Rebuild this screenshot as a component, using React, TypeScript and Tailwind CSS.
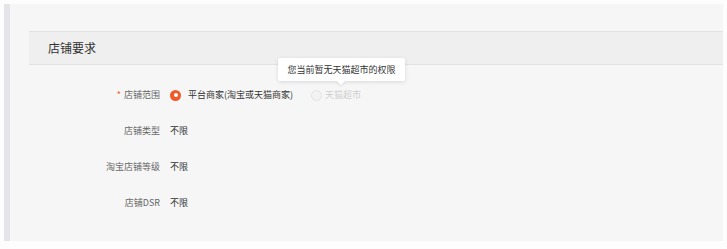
import React from "react";

const font = { fontFamily: '"Noto Sans CJK SC", "Noto Sans", sans-serif' };

function Row({ label, children, required }: { label: string; children: React.ReactNode; required?: boolean }) {
  return (
    <div className="flex h-[36px] items-center">
      <div className="flex w-[131px] shrink-0 items-center justify-end text-[9px] text-[#666]">
        {required && <span className="mr-[3px] text-[9px] text-[#f05a28]">*</span>}
        <span>{label}</span>
      </div>
      <div className="ml-[10px] flex items-center text-[9px] text-[#333]">{children}</div>
    </div>
  );
}

export default function App() {
  return (
    <div className="h-[249px] w-[727px] bg-[#fdfdfd] pl-[4px] pt-[4px]" style={font}>
      <div className="flex h-[237px] w-[719px]">
        <div className="w-[6px] shrink-0 bg-[#e4e4e9]" />
        <div className="flex-1 bg-[#f6f6f6] pl-[19px] pt-[27px]">
          <div className="flex h-[34px] items-center border-y border-[#e2e2e2] bg-[#efefef] pl-[19px] text-[12px] text-[#333]">
            店铺要求
          </div>
          <div className="mt-[12px]">
            <Row label="店铺范围" required>
              <div className="flex h-[12px] items-center">
                <span className="flex h-[11px] w-[11px] items-center justify-center rounded-full bg-[#f05a28]">
                  <span className="h-[4px] w-[4px] rounded-full bg-white" />
                </span>
                <span className="ml-[7px] text-[#333]">平台商家(淘宝或天猫商家)</span>
              </div>
              <div className="relative ml-[18px] flex h-[12px] items-center">
                <span className="h-[11px] w-[11px] rounded-full border border-[#e3e3e3] bg-[#f3f3f3]" />
                <span className="ml-[3px] text-[#d0d0d0]">天猫超市</span>
                <div className="absolute left-[-33px] top-[-31px] flex h-[23px] w-[127px] items-center justify-center rounded-[2px] bg-white text-[9px] text-[#333] shadow-[0_1px_4px_rgba(0,0,0,0.12)]">
                  <span className="relative z-10">您当前暂无天猫超市的权限</span>
                  <span className="absolute bottom-[-3px] left-[60px] h-[6px] w-[6px] rotate-45 bg-white shadow-[1px_1px_2px_rgba(0,0,0,0.08)]" />
                </div>
              </div>
            </Row>
            <Row label="店铺类型">不限</Row>
            <Row label="淘宝店铺等级">不限</Row>
            <Row label="店铺DSR">不限</Row>
          </div>
        </div>
      </div>
    </div>
  );
}
